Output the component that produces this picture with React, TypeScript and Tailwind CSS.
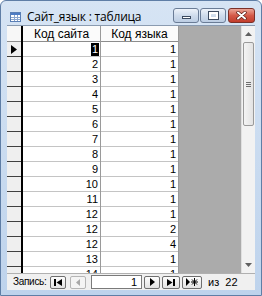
import React from "react"

const rows: [number, number][] = [
  [1, 1], [2, 1], [3, 1], [4, 1], [5, 1], [6, 1], [7, 1], [8, 1],
  [9, 1], [10, 1], [11, 1], [12, 1], [12, 2], [12, 4], [13, 1], [14, 1],
]

function TableIcon() {
  return (
    <svg width="11" height="10" viewBox="0 0 11 10" className="shrink-0">
      <rect x="0.5" y="0.5" width="10" height="9" fill="#fff" stroke="#5a7fb5" />
      <rect x="1" y="1" width="9" height="2" fill="#4d7cc4" />
      <path d="M1 5.5h9M1 7.5h9M4.5 3v6M7.5 3v6" stroke="#8aa6cf" />
    </svg>
  )
}

function NavButton({ children, disabled, w = "w-[16px]" }: { children: React.ReactNode; disabled?: boolean; w?: string }) {
  return (
    <div
      className={
        "h-[13px] flex items-center justify-center rounded-[2px] border shrink-0 " +
        w +
        " " +
        (disabled ? "border-[#b5b5b5] bg-[#f4f4f4]" : "border-[#6f6f6f] bg-linear-to-b from-[#fdfdfd] to-[#e2e2e2]")
      }
    >
      {children}
    </div>
  )
}

export default function App() {
  return (
    <div className="w-[262px] h-[296px] flex flex-col border border-[#5f7ea6] rounded-t-[6px] overflow-hidden bg-linear-to-b from-[#d6e4f4] to-[#bed3ec] font-['Liberation_Sans',sans-serif] text-[11px] text-black">
      {/* title bar */}
      <div className="h-[24px] flex items-start shrink-0">
        <div className="flex items-center mt-[10px] ml-[9px]">
          <TableIcon />
          <span className="ml-[6px] text-[12px] leading-none font-['Open_Sans',sans-serif] tracking-[-0.2px]">Сайт_язык : таблица</span>
        </div>
        <div className="ml-auto mr-[6px] mt-[7px] flex gap-[1px]">
          <div className="w-[26px] h-[15px] rounded-[3px] border border-[#6a7c96] bg-linear-to-b from-[#eef3fa] via-[#cfdcec] to-[#bccde3] flex items-end justify-center pb-[3px]">
            <div className="w-[9px] h-[3px] bg-white border border-[#3c4b60]" />
          </div>
          <div className="w-[26px] h-[15px] rounded-[3px] border border-[#6a7c96] bg-linear-to-b from-[#eef3fa] via-[#cfdcec] to-[#bccde3] flex items-center justify-center">
            <div className="w-[9px] h-[7px] border-[2px] border-white outline outline-1 outline-[#3c4b60]" />
          </div>
          <div className="ml-[1px] w-[27px] h-[15px] rounded-[3px] border border-[#7b3129] bg-linear-to-b from-[#eaa597] via-[#d45a49] to-[#c23c2b] flex items-center justify-center">
            <svg width="11" height="9" viewBox="0 0 11 9">
              <path d="M2 1.5l7 6M9 1.5l-7 6" stroke="#5a1d17" strokeWidth="3.4" strokeLinecap="round" />
              <path d="M2 1.5l7 6M9 1.5l-7 6" stroke="#fff" strokeWidth="2" strokeLinecap="round" />
            </svg>
          </div>
        </div>
      </div>

      {/* client area */}
      <div className="flex-1 mx-[6px] mb-[5px] flex flex-col border-t border-[#8a9bb0] bg-[#f0f0f0] min-h-0">
        <div className="h-[247px] flex overflow-hidden shrink-0">
          {/* record selectors */}
          <div className="w-[16px] flex flex-col bg-[#efefef] border-r-2 border-black shrink-0">
            <div className="h-[16px] shrink-0 border-b border-[#8d8d8d] bg-[#f7f7f7]" />
            {rows.map((_, i) => (
              <div key={i} className="h-[15px] shrink-0 border-b border-[#404040] flex items-center justify-center">
                {i === 0 && (
                  <svg width="6" height="9" viewBox="0 0 6 9">
                    <path d="M0 0l6 4.5L0 9z" fill="#000" />
                  </svg>
                )}
              </div>
            ))}
          </div>
          {/* data columns */}
          {[0, 1].map((c) => (
            <div key={c} className="w-[78px] flex flex-col shrink-0 bg-white border-r border-[#9a9a9a]">
              <div className="h-[16px] shrink-0 border-b border-[#8d8d8d] bg-[#fbfbfb] flex items-center justify-center leading-none text-[12px]">
                {c === 0 ? "Код сайта" : "Код языка"}
              </div>
              {rows.map((r, i) => (
                <div key={i} className="h-[15px] shrink-0 border-b border-[#c4c4c4] flex items-center justify-end pr-[1px] leading-none">
                  {c === 0 && i === 0 ? (
                    <span className="bg-black text-white px-[1px] h-[13px] flex items-center">{r[0]}</span>
                  ) : (
                    <span className="pr-[1px]">{r[c]}</span>
                  )}
                </div>
              ))}
            </div>
          ))}
          <div className="flex-1 bg-[#ababab]" />
          {/* vertical scrollbar */}
          <div className="w-[14px] shrink-0 flex flex-col bg-[#f2f2f2] border-l border-[#e0e0e0]">
            <div className="h-[16px] flex items-center justify-center">
              <svg width="7" height="4" viewBox="0 0 7 4">
                <path d="M0 4L3.5 0L7 4z" fill="#606060" />
              </svg>
            </div>
            <div className="mx-[1px] h-[84px] rounded-[2px] border border-[#9a9a9a] bg-linear-to-r from-[#f4f4f4] to-[#e3e3e3] flex flex-col items-center justify-center gap-[1px]">
              <div className="w-[5px] h-px bg-[#6e6e6e]" />
              <div className="w-[5px] h-px bg-[#6e6e6e]" />
              <div className="w-[5px] h-px bg-[#6e6e6e]" />
            </div>
            <div className="flex-1" />
            <div className="h-[16px] flex items-center justify-center">
              <svg width="7" height="4" viewBox="0 0 7 4">
                <path d="M0 0L3.5 4L7 0z" fill="#606060" />
              </svg>
            </div>
          </div>
        </div>

        {/* navigation bar */}
        <div className="flex-1 flex items-center pl-[6px] bg-[#f0f0f0] border-t border-[#b0b0b0] text-[10px]">
          <span className="w-[32px] leading-none tracking-[-0.3px] whitespace-nowrap">Запись:</span>
          <div className="ml-[5px]">
            <NavButton>
              <svg width="8" height="7" viewBox="0 0 8 7">
                <path d="M0 0h2v7H0zM8 0L2.5 3.5L8 7z" fill="#000" />
              </svg>
            </NavButton>
          </div>
          <div className="ml-[4px]">
            <NavButton disabled>
              <svg width="4" height="7" viewBox="0 0 4 7">
                <path d="M4 0L0 3.5L4 7z" fill="#a8a8a8" />
              </svg>
            </NavButton>
          </div>
          <div className="ml-[5px] w-[51px] h-[14px] shrink-0 bg-white border border-[#7a7a7a] flex items-center justify-end pr-[4px] leading-none text-[11px]">1</div>
          <div className="ml-[2px]">
            <NavButton>
              <svg width="5" height="8" viewBox="0 0 5 8">
                <path d="M0 0L5 4L0 8z" fill="#000" />
              </svg>
            </NavButton>
          </div>
          <div className="ml-[2px]">
            <NavButton w="w-[18px]">
              <svg width="8" height="7" viewBox="0 0 8 7">
                <path d="M0 0L5.5 3.5L0 7zM6 0h2v7H6z" fill="#000" />
              </svg>
            </NavButton>
          </div>
          <div className="ml-[2px]">
            <NavButton w="w-[20px]">
              <svg width="12" height="8" viewBox="0 0 12 8">
                <path d="M0 0L4 4L0 8z" fill="#000" />
                <path d="M8.5 0v8M5 4h7M6 1.5l5 5M11 1.5l-5 5" stroke="#000" strokeWidth="1" />
              </svg>
            </NavButton>
          </div>
          <span className="ml-[6px] leading-none whitespace-nowrap text-[11px]">из&nbsp; 22</span>
        </div>
      </div>
    </div>
  )
}
